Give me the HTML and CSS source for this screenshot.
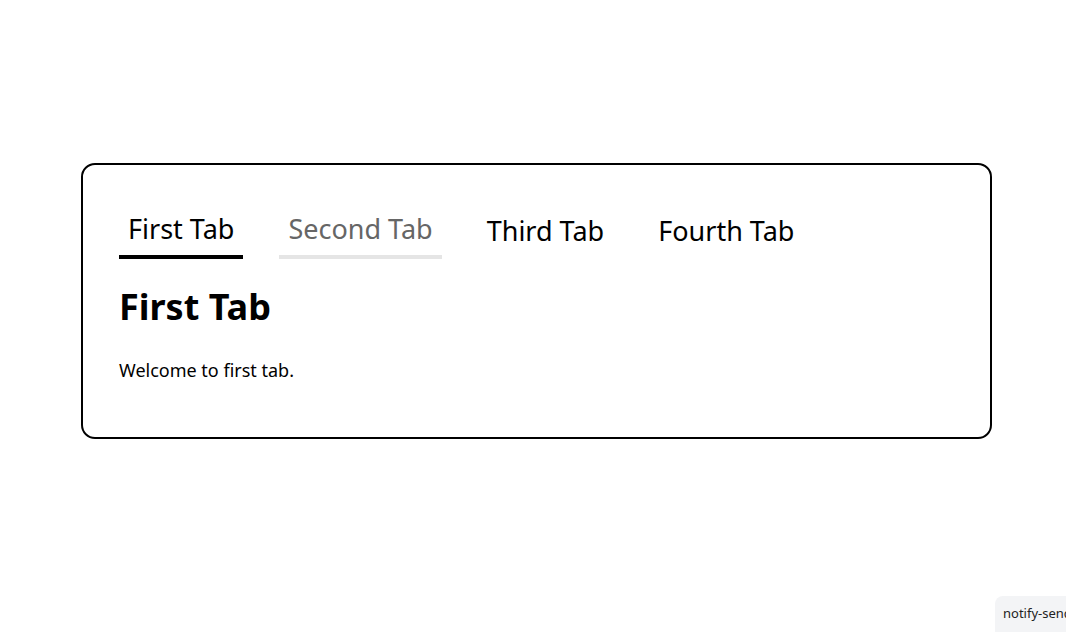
FILE: index.html
```html
<!DOCTYPE html>
<html>
<head>
<meta charset="utf-8">
<link rel="stylesheet" href="styles.css">
</head>
<body>
<div class="page">
  <div class="card">
    <div class="tabs">
      <div class="tab active">First Tab</div>
      <div class="tab hover">Second Tab</div>
      <div class="tab plain">Third Tab</div>
      <div class="tab plain">Fourth Tab</div>
    </div>
    <h1 class="title">First Tab</h1>
    <p class="text">Welcome to first tab.</p>
  </div>
</div>
<div class="notify">notify-send</div>
</body>
</html>
```
FILE: styles.css
```css
html, body {
  margin: 0;
  padding: 0;
  background: #fff;
  font-family: "Noto Sans", "Open Sans", sans-serif;
  color: #000;
}
.page {
  padding: 163px 74px 0 81px;
}
.card {
  width: 911px;
  box-sizing: border-box;
  border: 2px solid #000;
  border-radius: 14px;
  padding: 34px 36px 54px 36px;
}
.tabs {
  display: flex;
  gap: 36px;
  align-items: flex-start;
}
.tab {
  font-size: 27px;
  line-height: 36px;
  padding: 12px 9px 8px 9px;
  border-bottom: 4px solid transparent;
}
.tab.active {
  border-bottom-color: #000;
}
.tab.hover {
  color: #666;
  border-bottom-color: #e5e5e5;
}
.tab.plain {
  padding-top: 14px;
}
.title {
  font-size: 36px;
  font-weight: 700;
  margin: 23px 0 0 0;
  line-height: 46px;
}
.text {
  font-size: 18px;
  margin: 28px 0 0 0;
  line-height: 25px;
}
.notify {
  position: fixed;
  left: 995px;
  top: 596px;
  width: 100px;
  height: 50px;
  background: #f3f4f6;
  border-radius: 8px;
  font-size: 13px;
  padding: 8px 0 0 8px;
  box-sizing: border-box;
  color: #222;
}
```
